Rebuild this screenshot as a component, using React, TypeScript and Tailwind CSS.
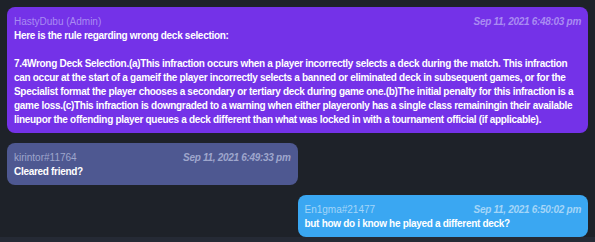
import React from 'react';

type Msg = {
  id: number;
  author: string;
  time: string;
  lines: string[];
  tone: 'admin' | 'other' | 'self';
};

const messages: Msg[] = [
  {
    id: 1,
    author: 'HastyDubu (Admin)',
    time: 'Sep 11, 2021 6:48:03 pm',
    tone: 'admin',
    lines: [
      'Here is the rule regarding wrong deck selection:',
      '',
      '7.4Wrong Deck Selection.(a)This infraction occurs when a player incorrectly selects a deck during the match. This infraction',
      'can occur at the start of a gameif the player incorrectly selects a banned or eliminated deck in subsequent games, or for the',
      'Specialist format the player chooses a secondary or tertiary deck during game one.(b)The initial penalty for this infraction is a',
      'game loss.(c)This infraction is downgraded to a warning when either playeronly has a single class remainingin their available',
      'lineupor the offending player queues a deck different than what was locked in with a tournament official (if applicable).',
    ],
  },
  {
    id: 2,
    author: 'kirintor#11764',
    time: 'Sep 11, 2021 6:49:33 pm',
    tone: 'other',
    lines: ['Cleared friend?'],
  },
  {
    id: 3,
    author: 'En1gma#21477',
    time: 'Sep 11, 2021 6:50:02 pm',
    tone: 'self',
    lines: ['but how do i know he played a different deck?'],
  },
];

const toneStyles = {
  admin: { bubble: 'w-full bg-[#7432e8]', meta: 'text-[#a98bf2]' },
  other: { bubble: 'w-1/2 bg-[#4e5891]', meta: 'text-[#9ea6cc]' },
  self: { bubble: 'w-1/2 self-end bg-[#3aa7f2]', meta: 'text-[#a3d5f8]' },
};

const Bubble: React.FC<{ msg: Msg }> = ({ msg }) => {
  const s = toneStyles[msg.tone];
  return (
    <div className={`${s.bubble} rounded-lg px-[7px] pt-[8px] pb-[6px] leading-[14px] text-[10px]`}>
      <div className={`flex justify-between ${s.meta}`}>
        <span>{msg.author}</span>
        <span className="font-bold italic tracking-[-0.3px]">{msg.time}</span>
      </div>
      {msg.lines.map((line, i) => (
        <div key={i} className="whitespace-nowrap font-bold text-white h-[14px] tracking-[-0.3px]">
          {line}
        </div>
      ))}
    </div>
  );
};

export default function App() {
  return (
    <div
      className="w-[595px] h-[242px] bg-[#1e2229] flex flex-col overflow-hidden"
      style={{ fontFamily: '"Liberation Sans", Arial, sans-serif' }}
    >
      <div className="flex flex-col gap-[10px] px-[7px] pt-[7px] flex-1">
        {messages.map((m) => (
          <Bubble key={m.id} msg={m} />
        ))}
      </div>
      <div className="h-[5px] bg-[#252a35]" />
    </div>
  );
}
